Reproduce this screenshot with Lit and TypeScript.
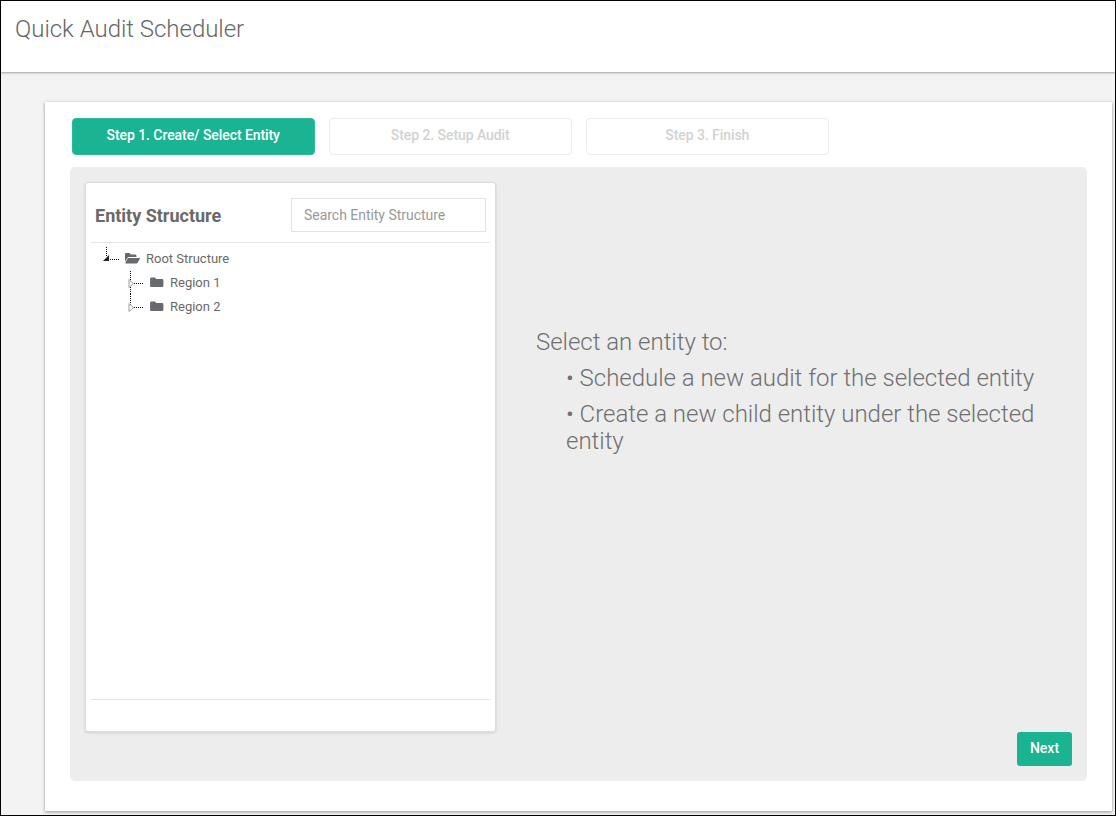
import { LitElement, html, css, svg } from "lit";
import { customElement } from "lit/decorators.js";

const folderClosed = svg`<svg class="fi" width="14" height="12" viewBox="0 0 14 12"><path d="M1.500 1.500h3.400l1.400 1.400h5.700c.8 0 1.400.6 1.400 1.300v5.500c0 .7-.6 1.300-1.400 1.300H1.500c-.8 0-1.400-.6-1.400-1.300V2.800c0-.7.600-1.300 1.400-1.300z" fill="#676a6d"/></svg>`;
const folderOpen = svg`<svg class="fi" width="15" height="12" viewBox="0 0 15 12"><path d="M0 9.500V2.200C0 1.500.5 1 1.200 1h3.200l1.400 1.500h4.400c.7 0 1.200.5 1.200 1.200V5H4c-.6 0-1.100.3-1.400.8L0 9.500z" fill="#676a6d"/><path d="M3.300 6h11c.5 0 .8.500.5 1l-2.400 4c-.2.300-.5.500-.9.500H1c-.5 0-.8-.5-.5-1l2-3.700c.2-.5.500-.8.800-.8z" fill="#676a6d"/></svg>`;
const rootConn = svg`<svg class="conn" width="22" height="24" viewBox="0 0 22 24"><path d="M7.500 1v9" stroke="#111" stroke-dasharray="1 1" fill="none"/><path d="M11 13.500h9" stroke="#111" stroke-dasharray="1 1" fill="none"/><path d="M10 9v6H4z" fill="#222"/></svg>`;
const childConn = (last: boolean) => svg`<svg class="conn" width="22" height="24" viewBox="0 0 22 24"><path d=${last ? "M7.500 0v13" : "M7.500 1v23"} stroke="#111" stroke-dasharray="1 1" fill="none"/><path d="M11 13.500h10" stroke="#111" stroke-dasharray="1 1" fill="none"/><path d="M6 9.500v8l4.500-4z" fill="#fff" stroke="#a0a0a0"/></svg>`;

@customElement("app-root")
export class AppRoot extends LitElement {
  static styles = css`
    :host { display: block; }
    * { box-sizing: border-box; }
    .frame {
      width: 1116px; height: 816px; overflow: hidden;
      border: 1px solid #000;
      background: #f3f3f3;
      font-family: Roboto, "Liberation Sans", sans-serif;
      display: flex; flex-direction: column;
    }
    .top {
      flex: none; height: 71px; background: #fff;
      box-shadow: 0 1px 2px rgba(0,0,0,.35);
      padding: 14px 14px; position: relative;
      font-weight: 300; font-size: 24px; line-height: 29px; color: #666;
      letter-spacing: -0.03px;
    }
    .sheet {
      margin: 30px 3px 0 44px; flex: none; height: 709px;
      background: #fff; padding: 16px 25px 30px 25px;
      box-shadow: 0 1px 3px rgba(0,0,0,.4);
    }
    .steps { display: flex; gap: 14.5px; padding-left: 2px; height: 37px; }
    .step {
      width: 242.5px; border: 1px solid #ececec; border-radius: 4px;
      display: flex; align-items: center; justify-content: center;
      padding-bottom: 3px; letter-spacing: -0.07px;
      font-size: 14px; font-weight: 500; color: #d2d2d2;
    }
    .step.on { background: #1bb493; border-color: #2bb99a; color: #fff; }
    .panel {
      margin-top: 12px; height: 614px; width: 1017px; background: #ededed;
      border-radius: 5px; padding: 15px; position: relative;
      display: flex;
    }
    .tree {
      flex: none; width: 411px; height: 550px; background: #fff;
      border: 1px solid #dcdcdc; border-radius: 3px; padding: 0 5px;
      box-shadow: 0 1px 3px rgba(0,0,0,.12);
      display: flex; flex-direction: column;
    }
    .tree-head {
      height: 60px; display: flex; align-items: center; justify-content: space-between;
      padding: 5px 4px 0 4px; border-bottom: 1px solid #e6e6e6; flex: none;
    }
    .tree-head h2 { margin: 0; font-size: 18px; font-weight: 700; color: #696969; }
    .search {
      width: 195px; height: 34px; border: 1px solid #e3e3e3; padding: 0 12px;
      font: 14px Roboto, sans-serif; color: #999; display: flex; align-items: center;
      letter-spacing: -0.03px;
    }
    .nodes { flex: 1; padding-top: 3px; border-bottom: 1px solid #e6e6e6; }
    .row { height: 24px; display: flex; align-items: center; font-size: 13px; color: #696969; padding-left: 8px; }
    .row.child { padding-left: 32px; }
    .conn { flex: none; margin-right: 4px; }
    .row.child .conn { margin-right: 5px; }
    .fi { flex: none; margin-right: 6px; }
    .foot { height: 31px; flex: none; }
    .msg {
      flex: 1; padding: 147px 0 0 40px; font-weight: 300; font-size: 24px;
      line-height: 26.5px; color: #707070; letter-spacing: -0.02px;
    }
    .msg ul { list-style: none; margin: 9.5px 0 0 30px; padding: 0; }
    .msg li + li { margin-top: 9.5px; }
    .next {
      position: absolute; right: 15px; bottom: 15px; width: 55px; height: 34px;
      background: #1bb493; color: #fff; border: 0; border-radius: 3px;
      font: 500 14px Roboto, sans-serif; padding: 0 0 2px;
    }
  `;
  render() {
    return html`<div class="frame">
      <div class="top">Quick Audit Scheduler</div>
      <div class="sheet">
        <div class="steps">
          <div class="step on">Step 1. Create/ Select Entity</div>
          <div class="step">Step 2. Setup Audit</div>
          <div class="step">Step 3. Finish</div>
        </div>
        <div class="panel">
          <div class="tree">
            <div class="tree-head"><h2>Entity Structure</h2><div class="search">Search Entity Structure</div></div>
            <div class="nodes">
              <div class="row">${rootConn}${folderOpen}<span>Root Structure</span></div>
              <div class="row child">${childConn(false)}${folderClosed}<span>Region 1</span></div>
              <div class="row child">${childConn(true)}${folderClosed}<span>Region 2</span></div>
            </div>
            <div class="foot"></div>
          </div>
          <div class="msg">
            Select an entity to:
            <ul>
              <li>• Schedule a new audit for the selected entity</li>
              <li>• Create a new child entity under the selected entity</li>
            </ul>
          </div>
          <button class="next">Next</button>
        </div>
      </div>
    </div>`;
  }
}
